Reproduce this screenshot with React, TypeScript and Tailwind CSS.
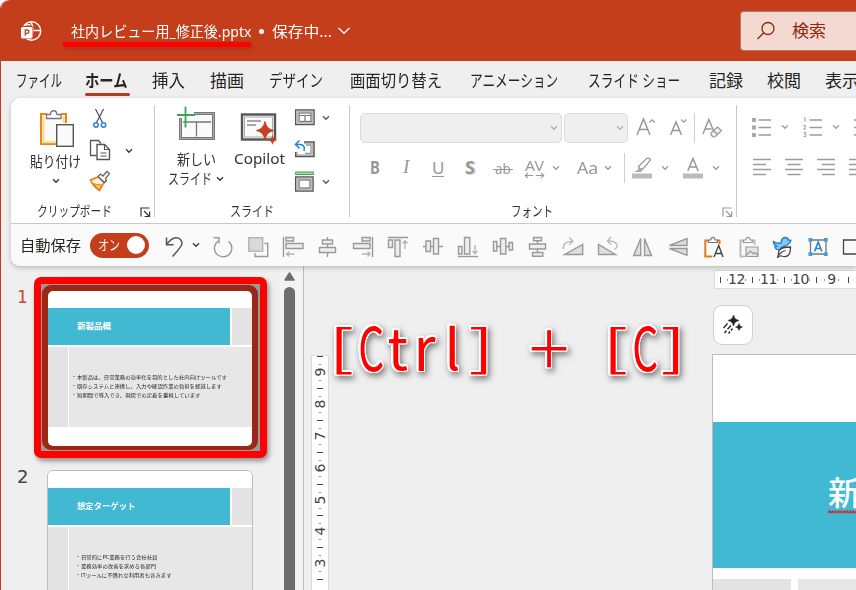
import React, { useLayoutEffect, useRef, useState } from 'react';
import clsx from 'clsx';

type FitProps = {
  w: number;
  className?: string;
  children: React.ReactNode;
};

// One line of text squeezed or stretched to a given width
function Fit({ w, className, children }: FitProps) {
  const ref = useRef<HTMLSpanElement>(null);
  const [scale, setScale] = useState(1);

  useLayoutEffect(() => {
    if (ref.current) setScale(w / ref.current.offsetWidth);
  }, [w]);

  return (
    <div className={clsx('shrink-0 whitespace-nowrap', className)} style={{ width: w }}>
      <span ref={ref} className="inline-block origin-left" style={{ transform: `scaleX(${scale})` }}>
        {children}
      </span>
    </div>
  );
}

type IconProps = {
  w?: number;
  h?: number;
  className?: string;
  children: React.ReactNode;
};

function Icon({ w = 22, h = 22, className, children }: IconProps) {
  return (
    <svg width={w} height={h} viewBox={`0 0 ${w} ${h}`} fill="none" stroke="currentColor" className={clsx('block shrink-0', className)}>
      {children}
    </svg>
  );
}

function Chevron({ className }: { className?: string }) {
  return (
    <Icon w={8} h={6} className={className}>
      <path d="M1 1.3l3 3 3-3" strokeWidth="1.3" />
    </Icon>
  );
}

function Launcher({ className }: { className?: string }) {
  return (
    <Icon w={11} h={11} className={className}>
      <path d="M1 9.5V1h8.5M4 4l5 5M9.6 4.5v5h-5" strokeWidth="1.2" />
    </Icon>
  );
}

const tabs = [
  { label: 'ファイル', w: 46, gap: 'ml-[15px]' },
  { label: 'ホーム', w: 43, gap: 'ml-[23px]', active: true },
  { label: '挿入', w: 33, gap: 'ml-[24px]' },
  { label: '描画', w: 34, gap: 'ml-[25px]' },
  { label: 'デザイン', w: 54, gap: 'ml-[25px]' },
  { label: '画面切り替え', w: 92, gap: 'ml-[27px]' },
  { label: 'アニメーション', w: 88, gap: 'ml-[28px]' },
  { label: 'スライド ショー', w: 92, gap: 'ml-[30px]' },
  { label: '記録', w: 34, gap: 'ml-[29px]' },
  { label: '校閲', w: 34, gap: 'ml-[24px]' },
  { label: '表示', w: 34, gap: 'ml-[24px]' },
];

function TitleBar() {
  return (
    <div className="relative flex h-[61px] shrink-0 items-center rounded-tl-[9px] bg-[#c43e1c] text-white">
      <Icon w={22} h={22} className="ml-[19px]">
        <circle cx="11.500" cy="11" r="9.200" strokeWidth="1.400" />
        <path d="M10.500 2c2 2 2.600 4.500 2.500 8.500M20.500 10.500H13c0 4-1 6.500-4 9.300M4.500 5.500q3-1.800 6-.5" strokeWidth="1.400" />
        <rect x="0.500" y="6" width="13" height="13" rx="2.500" fill="#c43e1c" stroke="none" />
        <rect x="1" y="7" width="11.500" height="11.500" rx="1.500" fill="white" stroke="none" />
        <path d="M5.300 15.800V10h1.900a1.700 1.700 0 0 1 0 3.400H5.300" stroke="#c43e1c" strokeWidth="1.300" />
      </Icon>
      <Fit w={180} className="ml-[29px] text-[15px] leading-[20px]">社内レビュー用_修正後.pptx</Fit>
      <span className="ml-[8px] mt-px h-[5px] w-[5px] rounded-full bg-white" />
      <Fit w={60} className="ml-[8px] text-[15px] leading-[20px]">保存中...</Fit>
      <Icon w={14} h={8} className="ml-[5px]">
        <path d="M1.500 1l5.500 5.300L12.500 1" strokeWidth="1.300" />
      </Icon>
      <div className="absolute left-[62px] top-[42px] h-[5px] w-[188px] bg-[#fe0000] shadow-[1px_2px_4px_rgba(0,0,0,0.15)]" />
      <div className="ml-auto flex h-[40px] w-[116px] shrink-0 items-center rounded-l-[4px] border border-r-0 border-[#b07a6c] bg-[#f3d9d2] text-[#8e2a10]">
        <Icon w={20} h={20} className="ml-[15px]">
          <circle cx="12" cy="7.500" r="6" strokeWidth="1.300" />
          <path d="M7.700 11.800L1.500 18" strokeWidth="1.300" />
        </Icon>
        <Fit w={34} className="ml-[16px] text-[17px] leading-[20px]">検索</Fit>
      </div>
    </div>
  );
}

function Tabs() {
  return (
    <div className="flex h-[37px] shrink-0 items-start pt-[9px] text-[17px] leading-[22px] text-[#252423]">
      {tabs.map((tab) => (
        <div key={tab.label} className={clsx('shrink-0', tab.gap)}>
          <Fit w={tab.w} className={tab.active ? 'font-bold' : ''}>{tab.label}</Fit>
          {tab.active && <div className="mt-px h-[3px] w-[45px] -mr-[2px] rounded-full bg-[#b83b1d]" />}
        </div>
      ))}
    </div>
  );
}

function ClipboardGroup() {
  return (
    <div className="flex w-[143px] shrink-0 flex-col text-[#333]">
      <div className="flex h-[102px]">
        <div className="ml-[18px] flex w-[52px] flex-col items-center pt-[11px]">
          <Icon w={36} h={39} className="ml-[3px]">
            <path d="M8 5H2v30h16M22 5h5v9" stroke="#e8861e" strokeWidth="2" />
            <path d="M4.500 7v26H17M24.500 7v7" stroke="#fbdc98" strokeWidth="2.500" />
            <path d="M6 8h17v6h-6v18H6z" fill="#fafafa" stroke="none" />
            <path d="M7.500 9.500V5.500h4c.3-5 6-5 6.500 0h4v4z" fill="white" stroke="#777" strokeWidth="1.300" />
            <rect x="17.700" y="15.700" width="16.600" height="21.600" fill="#fafafa" stroke="#555" strokeWidth="1.400" />
          </Icon>
          <Fit w={51} className="mt-[3px] text-[15px] leading-[20px]">貼り付け</Fit>
          <Chevron className="ml-[2px] mt-[7px]" />
        </div>
        <div className="ml-[8px] flex flex-col items-center pt-[9px]">
          <Icon w={22} h={22} className="text-[#555]">
            <path d="M6.500 2l7 13.500M14.500 2l-7 13.500" strokeWidth="1.300" />
            <circle cx="7" cy="18" r="2.200" stroke="#2488d8" strokeWidth="1.500" />
            <circle cx="14.500" cy="18" r="2.200" stroke="#2488d8" strokeWidth="1.500" />
          </Icon>
          <Icon w={22} h={22} className="mt-[10px] text-[#555]">
            <path d="M7.500 16.500H1.500v-15h8l2.500 3" strokeWidth="1.300" />
            <path d="M8 5.500h7.500l5 5v10H8z" fill="white" strokeWidth="1.400" />
            <path d="M15.500 5.500v5h5M11.500 14h6M11.500 17h6" strokeWidth="1.200" />
          </Icon>
          <Icon w={22} h={22} className="mt-[9px] text-[#666]">
            <path d="M9 7L1.500 10q3 7 9 10.500l4.500-8z" fill="#fdf3dd" stroke="#e17a12" strokeWidth="1.500" />
            <path d="M3.500 13.500q5 1.500 9.500 1.500l-2.500 5z" fill="#f9c56e" stroke="#e17a12" />
            <path d="M9 6.500l2.500-2.500 2.500 2 4-4.500 2.500 2-4 5 1 2-2 2z" fill="white" strokeWidth="1.300" />
          </Icon>
        </div>
        <Chevron className="ml-[14px] mt-[50px]" />
      </div>
      <div className="flex items-start">
        <Fit w={75} className="ml-[26px] pt-[2px] text-[14px] leading-[18px]">クリップボード</Fit>
        <Launcher className="ml-[28px] mt-[7px]" />
      </div>
    </div>
  );
}

function SlideGroup() {
  return (
    <div className="flex w-[194px] shrink-0 flex-col text-[#333]">
      <div className="flex h-[102px]">
        <div className="ml-[13px] flex w-[60px] flex-col pt-[8px]">
          <Icon w={38} h={36} className="ml-[9px] text-[#777]">
            <rect x="3.500" y="7.500" width="33" height="25" fill="#fafafa" strokeWidth="3" />
            <rect x="3.500" y="7.500" width="33" height="25" stroke="#aaa" strokeWidth="1" />
            <path d="M6 16h28M19.500 16v14.500" strokeWidth="1.300" />
            <path d="M1 6h16v6H1z" fill="white" stroke="none" />
            <path d="M8.500 0.500v21M0 9h18" stroke="#35a853" strokeWidth="1.800" />
          </Icon>
          <Fit w={39} className="ml-[9px] mt-[7px] text-[15px] leading-[20px]">新しい</Fit>
          <div className="flex items-center">
            <Fit w={44} className="text-[15px] leading-[19px]">スライド</Fit>
            <Chevron className="ml-[4px]" />
          </div>
        </div>
        <div className="ml-[5px] flex w-[52px] flex-col items-center pt-[15px]">
          <Icon w={38} h={34} className="text-[#555]">
            <rect x="2" y="1.500" width="33" height="25" fill="#fafafa" strokeWidth="2.400" />
            <rect x="4.500" y="4" width="28" height="20" stroke="#aaa" strokeWidth="1" />
            <path d="M7 8h14M7 12h9" strokeWidth="1.200" />
            <path d="M25 8.500q1.300 7.500 8.500 9-7.200 1.500-8.500 9-1.300-7.500-8.500-9 7.200-1.500 8.500-9z" fill="#c6401f" stroke="#c6401f" strokeWidth="1" />
            <path d="M32.500 22q.8 4.200 4.500 5-3.700.8-4.500 5-.8-4.200-4.500-5 3.700-.8 4.500-5z" fill="#c6401f" stroke="none" />
          </Icon>
          <Fit w={51} className="mt-[1px] text-[15px] leading-[20px]">Copilot</Fit>
        </div>
        <div className="ml-[9px] flex w-[40px] flex-col gap-[10px] pt-[9px] text-[#555]">
          <div className="flex items-center">
            <Icon>
              <rect x="1.700" y="3" width="18.300" height="14.500" strokeWidth="1.500" />
              <rect x="3.200" y="4.500" width="15.300" height="11.500" stroke="#bbb" strokeWidth="1.500" />
              <rect x="5" y="6" width="12" height="8.500" stroke="#777" strokeWidth="1.300" />
              <path d="M5 8.500h12M11 8.500v6" stroke="#777" strokeWidth="1.200" />
            </Icon>
            <Chevron className="ml-[6px]" />
          </div>
          <Icon>
            <path d="M10 4.500h8.500V16H3.200v-3" stroke="#bbb" strokeWidth="1.500" />
            <path d="M10 3h10v14.500H1.700V13" strokeWidth="1.500" />
            <path d="M12 6h5v8.500H11" stroke="#999" strokeWidth="1.300" />
            <path d="M5.500 1.500L1.500 5.500l4 4M1.500 5.500h4.500c4 0 5 3 4 6.500" stroke="#1f8ad6" strokeWidth="1.600" />
          </Icon>
          <div className="flex items-center">
            <Icon>
              <rect x="1.700" y="1" width="17.600" height="2.500" fill="#a8dbb2" stroke="#3aa655" strokeWidth="1" />
              <rect x="1.700" y="6" width="17.300" height="14" strokeWidth="1.500" />
              <rect x="3.200" y="7.500" width="14.300" height="11" stroke="#bbb" strokeWidth="1.500" />
              <rect x="5" y="9" width="11" height="8" stroke="#777" strokeWidth="1.300" />
            </Icon>
            <Chevron className="ml-[6px]" />
          </div>
        </div>
      </div>
      <Fit w={44} className="ml-[75px] pt-[2px] text-[14px] leading-[18px]">スライド</Fit>
    </div>
  );
}

function FontGroup() {
  return (
    <div className="flex w-[386px] shrink-0 flex-col text-[#989898]">
      <div className="flex h-[102px] flex-col pl-[10px] pt-[15px]">
        <div className="flex h-[30px] items-center">
          <div className="flex h-[30px] w-[202px] items-center justify-end rounded-[5px] border border-[#dcdcdc] bg-[#efefef] pr-[3px]">
            <Chevron className="text-[#b0b0b0]" />
          </div>
          <div className="ml-[2px] flex h-[30px] w-[64px] items-center justify-end rounded-[5px] border border-[#dcdcdc] bg-[#efefef] pr-[3px]">
            <Chevron className="text-[#b0b0b0]" />
          </div>
          <Icon w={20} h={22} className="ml-[8px]">
            <path d="M1 18L7.500 2l6.500 16M3.500 12.500h8" strokeWidth="1.500" />
            <path d="M13.500 5.500l2.700-2.700 2.700 2.700" strokeWidth="1.200" />
          </Icon>
          <Icon w={20} h={22} className="ml-[13px]">
            <path d="M1.500 18L7 5l5.500 13M3.500 13.500h7" strokeWidth="1.500" />
            <path d="M12 2.500l2.700 2.700 2.700-2.700" strokeWidth="1.200" />
          </Icon>
          <span className="ml-[5px] h-[30px] w-px bg-[#d0d0d0]" />
          <Icon w={22} h={22} className="ml-[7px]">
            <path d="M1 17L6.800 2.500 12.500 16M3.500 12h6" strokeWidth="1.500" />
            <path d="M9 16l6.500-6 4 3.500-6.500 6.500h-2L9 18zM11.500 13.500l4 4" fill="#eee" strokeWidth="1.200" />
          </Icon>
        </div>
        <div className="mt-[10px] flex h-[30px] items-center">
          <Fit w={10} className="-mt-[3px] ml-[10px] text-[18px] font-bold leading-[24px]">B</Fit>
          <span className="-mt-[2px] ml-[23px] w-[10px] font-['Liberation_Serif',serif] text-[19px] italic leading-[24px]">I</span>
          <span className="-mt-px ml-[19px] w-[12px] border-b-[1.500px] border-[#989898] text-center text-[17px] leading-[17px]">U</span>
          <Fit w={10} className="-mt-[3px] ml-[21px] text-[18px] font-bold leading-[24px] [text-shadow:1.500px_1px_0_#ddd]">S</Fit>
          <div className="relative ml-[18px] w-[20px]">
            <Fit w={16} className="ml-[2px] text-[15px] leading-[24px]">ab</Fit>
            <span className="absolute left-0 top-[13px] h-px w-[20px] bg-[#989898]" />
          </div>
          <div className="ml-[11px] flex w-[21px] flex-col items-center">
            <Fit w={19} className="text-[15px] leading-[14px]">AV</Fit>
            <Icon w={21} h={7}>
              <path d="M4 .8L1.200 3.500 4 6.200M1.200 3.500h8M17 .8l2.800 2.700L17 6.200M19.800 3.500h-8" strokeWidth="1.100" />
            </Icon>
          </div>
          <Chevron className="ml-[7px]" />
          <Fit w={21} className="ml-[17px] text-[16px] leading-[22px]">Aa</Fit>
          <Chevron className="ml-[6px]" />
          <span className="ml-[12px] h-[30px] w-px bg-[#d0d0d0]" />
          <Icon w={20} h={22} className="ml-[7px]">
            <path d="M6.500 9.500l8-8q3-1 4 1.500l-7.500 9q-3 1-4.500-2.500z" strokeWidth="1.300" />
            <path d="M7 10l3.500 3.500-1.500 1.500H2l3.500-2z" fill="#aaa" stroke="none" />
            <path d="M0 16.500h20v5H0z" fill="#bbb" stroke="none" />
          </Icon>
          <Chevron className="ml-[9px]" />
          <Icon w={20} h={22} className="ml-[14px]">
            <path d="M4.800 14L10 1.500 15.200 14M6.500 10h7" strokeWidth="1.500" />
            <path d="M0 16.500h20v5H0z" fill="#bbb" stroke="none" />
          </Icon>
          <Chevron className="ml-[9px]" />
        </div>
      </div>
      <div className="flex items-start">
        <Fit w={42} className="ml-[161px] pt-[2px] text-[14px] leading-[18px] text-[#333]">フォント</Fit>
        <Launcher className="ml-[169px] mt-[7px]" />
      </div>
    </div>
  );
}

function ParagraphGroup() {
  return (
    <div className="flex shrink-0 flex-col pl-[15px] pt-[18px] text-[#9c9c9c]">
      <div className="flex items-center">
        <Icon>
          <path d="M0 2h4v4H0zM0 9.500h4v4H0zM0 17h4v4H0z" fill="#aaa" stroke="none" />
          <path d="M6.500 4H19M6.500 11.500H19M6.500 19H19" strokeWidth="1.300" />
        </Icon>
        <Chevron className="ml-[7px]" />
        <Icon className="ml-[14px]">
          <path d="M.8 2.500L2 1.500V6M.3 9.800q2-1.500 2.500.2 0 .8-2.300 3H3.300M.5 16.500H3l-1.500 1.700q2 0 1.500 1.800-.8 1.300-2.500.3" strokeWidth="1" />
          <path d="M6.500 4H19M6.500 11.500H19M6.500 19H19" strokeWidth="1.300" />
        </Icon>
        <Chevron className="ml-[7px]" />
        <Icon className="ml-[14px]">
          <path d="M0 4h19M0 11.500h19M0 19h19" strokeWidth="1.300" />
        </Icon>
      </div>
      <div className="mt-[19px] flex gap-[10px]">
        <Icon>
          <path d="M1 2.500h18M1 7.500h13M1 12.500h18M1 17.500h13" strokeWidth="1.300" />
        </Icon>
        <Icon>
          <path d="M1 2.500h18M3.500 7.500h13M1 12.500h18M3.500 17.500h13" strokeWidth="1.300" />
        </Icon>
        <Icon>
          <path d="M1 2.500h18M6 7.500h13M1 12.500h18M6 17.500h13" strokeWidth="1.300" />
        </Icon>
        <Icon>
          <path d="M1 2.500h18M1 7.500h18M1 12.500h18M1 17.500h18" strokeWidth="1.300" />
        </Icon>
      </div>
    </div>
  );
}

const quickIcons = [
  <path d="M16.500 5.300a8.700 8.700 0 1 1-9.500-.8M1.700 1.700H7V7.500" />,
  <>
    <rect x="1.700" y="1.700" width="14" height="13.500" fill="#d9d9d9" stroke="#b5b5b5" />
    <path d="M17.500 7.500h3.200v13H8v-3.500" />
  </>,
  <>
    <path d="M1.500 1v20" />
    <path d="M4 1.500h7.500V5H4zM4 7.500h17v5H4z" fill="#eee" />
    <path d="M12.500 18h-8M7.300 15.500L4.500 18l2.800 2.500" stroke="#b5b5b5" />
  </>,
  <>
    <path d="M10.500 1v20" />
    <path d="M5.500 4h10v4h-10zM2.500 11.500h16v5h-16z" fill="#eee" />
  </>,
  <>
    <path d="M20.500 1v20" />
    <path d="M10 1.500h8V5h-8zM1.500 7.500H18v5H1.500z" fill="#eee" />
    <path d="M10 18h8M15.500 15.500L18 18l-2.500 2.500" stroke="#b5b5b5" />
  </>,
  <>
    <path d="M1 1.500h20" />
    <path d="M1.500 4h4v7.500h-4zM8 4h5v16.500H8z" fill="#eee" />
    <path d="M18 13V5M15.500 7.500L18 4.700l2.500 2.800" stroke="#b5b5b5" />
  </>,
  <>
    <path d="M1 10.500h20" />
    <path d="M4 5h4.500v10.500H4zM11.500 2.500h5v15.500h-5z" fill="#eee" />
  </>,
  <>
    <path d="M1 20.500h20" />
    <path d="M1.500 10.500H5v7.500H1.500zM7.500 1.500h5.300V18H7.500z" fill="#eee" />
    <path d="M18 9v8.500M15.500 15l2.500 2.800 2.500-2.800" stroke="#b5b5b5" />
  </>,
  <>
    <path d="M1 10.500h20" />
    <path d="M1.500 5.500h3.300v9.500H1.500zM8.500 2.500h5.300v15.500H8.500zM17.200 6.500h3.300v7.500h-3.300z" fill="#eee" />
  </>,
  <>
    <path d="M10.500 1v20" />
    <path d="M6.500 1.500h8v3.300h-8zM2.500 8h16v5h-16zM5.500 16.500h10.300v3.800H5.500z" fill="#eee" />
  </>,
  <>
    <path d="M2.700 18.500h18V8.500z" fill="#ddd" />
    <path d="M1.500 13c-1-5 3-8 9-7.300M7.500 1.500L11 5.500l-4 3.300" stroke="#b5b5b5" strokeWidth="1.300" />
  </>,
  <>
    <path d="M1.500 8.500v10h17z" fill="#ddd" />
    <path d="M17.500 13.500c6-4 1-9-6.500-8.500M14 1L10.500 5l3.800 3.500" stroke="#b5b5b5" strokeWidth="1.300" />
  </>,
  <path d="M1.700 19.500h7V2.500zM19.500 19.500h-7V2.500z" fill="#ddd" />,
  <path d="M2.500 9.500l17.500-7v7zM2.500 12.500H20v6.800z" fill="#ddd" />,
  <>
    <path d="M6.500 4.500H3.300v16h7M14.500 4.500h3v3.500" stroke="#e07b1a" strokeWidth="2" />
    <path d="M6.500 6.500V4h2.300c.3-3.500 3.800-3.500 4.200 0h2.300v2.500z" fill="white" stroke="#777" strokeWidth="1.200" />
    <path d="M12 21l4.700-11.500L21 21M13.500 17.500h6" stroke="#444" strokeWidth="1.400" />
  </>,
  <>
    <path d="M6.500 4.500H3.500v16H8M14.500 4.500h3v4.500" stroke="#bbb" strokeWidth="2" />
    <path d="M6.500 6.500V4h2.300c.3-3.500 3.800-3.500 4.200 0h2.300v2.500z" fill="white" strokeWidth="1.200" />
    <path d="M9 11h12v9.500H9zM9.500 19l4-4 3 3 1.500-1.500 3 3" fill="#e5e5e5" strokeWidth="1.200" />
  </>,
  <>
    <path d="M1.500 5.500q3.500 2.500 7.500 1.500.5-5 4-5.500 3 .3 3.500 2.500l2.300.3q-.5 3-2.800 4-1.500 2-4.500 2.200-3 1-3.500 3.500-4.500 0-5-3 1.500 0 2-.8Q1.500 9 1.500 5.500z" fill="#8cc4ef" stroke="#1d7fd0" strokeWidth="1.400" />
    <path d="M6.500 18.500q-1.500-7.500 12-7.500 0 12-9 9-1.500-.5-4 1.500zM6.500 19.500q2-3.500 7-5" fill="#fafafa" stroke="#444" strokeWidth="1.300" />
  </>,
  <>
    <path d="M3.500 4h15.500v14H3.500z" stroke="#777" strokeWidth="1.300" />
    <path d="M1.500 2h3.700v3.700H1.500zM17 2h3.700v3.700H17zM1.500 16.200h3.700v3.700H1.500zM17 16.200h3.700v3.700H17z" fill="#3b9ee0" stroke="none" />
    <path d="M7.500 15.500L11.200 6l3.700 9.500M8.800 12.500h4.800" stroke="#2488d8" strokeWidth="1.600" />
  </>,
  <path d="M1.500 4h20v14h-20z" stroke="#444" strokeWidth="1.300" />,
];

function QuickAccess() {
  return (
    <div className="flex h-[43px] shrink-0 items-center overflow-hidden rounded-bl-[9px] border-t border-[#c8c8c8] bg-[#fafafa] pl-[9px]">
      <Fit w={61} className="text-[15px] leading-[20px] text-[#252423]">自動保存</Fit>
      <div className="ml-[9px] flex h-[25px] w-[59px] shrink-0 items-center rounded-full bg-[#c43e1c] text-white">
        <Fit w={22} className="ml-[8px] text-[14px] leading-[20px]">オン</Fit>
        <span className="ml-[7px] h-[18px] w-[18px] rounded-full bg-white" />
      </div>
      <Icon className="ml-[14px] mt-[3px] text-[#555]">
        <path d="M3.500 1.500v7.300h7M3.800 8.500C9 .5 15 1 17.500 3.500c3.500 4 1 7-8 17" strokeWidth="1.500" />
      </Icon>
      <Chevron className="ml-[7px] text-[#333]" />
      <div className="ml-[5px] mt-[3px] flex text-[#999]">
        {quickIcons.map((icon, i) => (
          <div key={i} className="flex w-[35px] shrink-0 justify-center">
            <Icon className="[stroke-width:1.400]">{icon}</Icon>
          </div>
        ))}
      </div>
    </div>
  );
}

function Ribbon() {
  return (
    <div className="z-10 ml-[10px] flex h-[168px] shrink-0 flex-col rounded-l-[9px] bg-white shadow-[0_2px_5px_rgba(0,0,0,0.22)]">
      <div className="flex h-[125px] overflow-hidden">
        <ClipboardGroup />
        <span className="mt-[7px] h-[112px] w-px shrink-0 bg-[#c8c8c8]" />
        <SlideGroup />
        <span className="mt-[7px] h-[112px] w-px shrink-0 bg-[#c8c8c8]" />
        <FontGroup />
        <span className="mt-[7px] h-[112px] w-px shrink-0 bg-[#c8c8c8]" />
        <ParagraphGroup />
      </div>
      <QuickAccess />
    </div>
  );
}

type ThumbProps = {
  title: string;
  titleWidth: number;
  lines: { text: string; w: number }[];
  indent: string;
};

function SlideThumb({ title, titleWidth, lines, indent }: ThumbProps) {
  return (
    <div className="flex h-[155px] w-[204px] flex-col gap-[2px] overflow-hidden rounded-[5px] bg-white pt-[17px] font-['Noto_Sans_CJK_JP',sans-serif]">
      <div className="flex h-[37px] shrink-0 gap-[2px]">
        <div className="flex w-[182px] items-center bg-[#41b9d3] pb-[3px] pl-[29px] text-white">
          <Fit w={titleWidth} className="text-[8.500px] font-bold leading-[12px]">{title}</Fit>
        </div>
        <div className="flex-1 bg-[#e3e3e3]" />
      </div>
      <div className="flex h-[80px] shrink-0 gap-px">
        <div className="w-[20px] bg-[#e3e3e3]" />
        <div className={clsx('flex-1 bg-[#e7e7e7] pt-[25px]', indent)}>
          {lines.map((line) => (
            <div key={line.text} className="flex h-[9px] items-center text-[5px] leading-[9px] text-[#222]">
              <span className="mr-[2px] h-px w-[2px] bg-[#41b9d3]" />
              <Fit w={line.w}>{line.text}</Fit>
            </div>
          ))}
        </div>
      </div>
    </div>
  );
}

function SlideList() {
  return (
    <div className="flex w-[279px] shrink-0 flex-col font-['Noto_Sans_CJK_JP',sans-serif]">
      <div className="mt-[11px] flex h-[181px] shrink-0">
        <span className="w-[33px] pl-[16px] pt-[10px] font-['DejaVu_Sans',sans-serif] text-[17px] leading-[20px] text-[#d24726]">1</span>
        <div className="h-[181px] w-[233px] rounded-[7px] border-[7px] border-[#fe0000] bg-[#999] shadow-[2px_3px_5px_rgba(0,0,0,0.4)]">
          <div className="ml-[1px] mt-[1px] h-[165px] w-[216px] rounded-[9px] border-[6px] border-b-[4px] border-[#9c2716] bg-[#9c2716] shadow-[inset_0_0_3px_#5e150b]">
            <SlideThumb
              title="新製品概"
              titleWidth={34}
              indent="pl-[4px]"
              lines={[
                { text: '本製品は、日常業務の効率化を目的とした社内向けツールです', w: 150 },
                { text: '既存システムと連携し、入力や確認作業の負担を軽減します', w: 145 },
                { text: '短期間で導入でき、現場での定着を重視しています', w: 124 },
              ]}
            />
          </div>
        </div>
      </div>
      <div className="mt-[12px] flex shrink-0">
        <span className="w-[46px] pl-[16px] font-['DejaVu_Sans',sans-serif] text-[18px] leading-[13px] text-[#444]">2</span>
        <div className="w-[206px] rounded-[6px] border border-[#bdbdbd]">
          <SlideThumb
            title="想定ターゲット"
            titleWidth={59}
            indent="pl-[8px]"
            lines={[
              { text: '日常的にPC業務を行う会社社員', w: 76 },
              { text: '業務効率の改善を求める各部門', w: 75 },
              { text: 'ITツールに不慣れな利用者も含みます', w: 90 },
            ]}
          />
        </div>
      </div>
    </div>
  );
}

function Scrollbar() {
  return (
    <div className="flex w-[24px] shrink-0 flex-col border-r border-[#bdbdbd] bg-[#f3f3f3] pl-[4px] pt-[6px]">
      <Icon w={11} h={9}>
        <path d="M5.500 1L10 8H1z" fill="#6e6e6e" stroke="#6e6e6e" strokeLinejoin="round" strokeWidth="1.500" />
      </Icon>
      <div className="mt-[6px] w-[11px] flex-1 rounded-t-full bg-[#6e6e6e]" />
    </div>
  );
}

function VerticalRuler() {
  return (
    <div className="mt-[89px] w-[18px] shrink-0 overflow-hidden border border-b-0 border-[#dcdcdc] bg-white font-['DejaVu_Sans',sans-serif] text-[14px] text-[#444]">
      {[9, 8, 7, 6, 5, 4, 3].map((n) => (
        <div key={n} className="flex h-[31.900px] flex-col items-center">
          <span className="h-px w-[6px] shrink-0 bg-[#444]" />
          <span className="mt-[7px] h-px w-[2px] shrink-0 bg-[#999]" />
          <span className="flex h-[14px] w-[16px] shrink-0 -rotate-90 items-center justify-center leading-[14px]">{n}</span>
          <span className="mt-[1px] h-px w-[2px] shrink-0 bg-[#999]" />
        </div>
      ))}
      <div className="mx-auto h-px w-[6px] bg-[#444]" />
    </div>
  );
}

function Editor() {
  return (
    <div className="ml-auto flex w-[144px] shrink-0 flex-col overflow-hidden pt-[4px]">
      <div className="ml-[2px] flex h-[19px] shrink-0 overflow-hidden border border-r-0 border-[#dcdcdc] bg-white pl-[5px] font-['DejaVu_Sans',sans-serif] text-[14px] leading-[17px] text-[#444]">
        {[12, 11, 10, 9].map((n) => (
          <div key={n} className="flex w-[32px] shrink-0 items-center">
            <span className="h-[6px] w-px shrink-0 bg-[#444]" />
            <span className={clsx('h-[2px] w-px shrink-0 bg-[#999]', n > 9 ? 'ml-[6px]' : 'ml-[7px]')} />
            <span className={clsx('shrink-0 text-center tracking-[-0.500px]', n > 9 ? 'w-[17px]' : 'w-[13px]')}>{n}</span>
            <span className="h-[2px] w-px shrink-0 bg-[#999]" />
          </div>
        ))}
        <span className="mt-[6px] h-[6px] w-px shrink-0 bg-[#444]" />
      </div>
      <div className="ml-[1px] mt-[16px] flex h-[40px] w-[40px] shrink-0 items-center justify-center rounded-[9px] border border-[#cfcfcf] bg-white text-[#222]">
        <Icon>
          <path d="M11.500 1q.8 4.700 5.500 5.500-4.700.8-5.500 5.500Q10.700 7.300 6 6.500q4.700-.8 5.500-5.500zM17 9.500q.5 3 3.500 3.500-3 .5-3.500 3.500-.5-3-3.500-3.500 3-.5 3.500-3.500z" fill="currentColor" stroke="currentColor" strokeWidth=".5" />
          <path d="M5.500 9.500l-4 4.500M9 11.500l-3.500 3.700M4.500 16.500L2.500 19M10.500 14.500L9 16.500M8 17.500l-1.500 2" strokeWidth="1.300" />
        </Icon>
      </div>
      <div className="mt-[9px] flex-1 border-l border-t border-[#bdbdbd] bg-white pt-[67px]">
        <div className="flex h-[146px] flex-col justify-center overflow-hidden bg-[#41b9d3] pl-[115px] text-white">
          <div className="h-[34px] whitespace-nowrap text-[33px] font-medium leading-[34px]">新製品概</div>
          {/* spelling squiggle */}
          <Icon w={30} h={4} className="text-[#e02020]">
            <path d="M0 2.800l1.500-1.800L3 2.800 4.500 1 6 2.800 7.500 1 9 2.800 10.500 1 12 2.800 13.500 1 15 2.800 16.500 1 18 2.800 19.500 1 21 2.800 22.500 1 24 2.800 25.500 1 27 2.800 28.500 1 30 2.800" strokeWidth="1.200" />
          </Icon>
        </div>
        <div className="mt-[11px] flex h-[20px] gap-[7px]">
          <div className="w-[78px] shrink-0 bg-[#e3e3e3]" />
          <div className="flex-1 bg-[#e7e7e7]" />
        </div>
      </div>
    </div>
  );
}

const keyGlyphs = [
  { char: '[', cell: 'w-[27px]', style: 'text-[49px] scale-x-[1.550] -translate-x-[2px]' },
  { char: 'C', cell: 'w-[27px]', style: 'text-[60px] scale-x-[0.680] translate-x-[1px]' },
  { char: 't', cell: 'w-[27px]', style: 'text-[57px] scale-x-[0.950]' },
  { char: 'r', cell: 'w-[28px]', style: 'text-[60px] scale-x-[0.950]' },
  { char: 'l', cell: 'w-[27px]', style: 'text-[56px] translate-y-[1px]' },
  { char: ']', cell: 'w-[27px]', style: 'text-[49px] scale-x-[1.550] translate-x-[2px]' },
  { char: '+', cell: 'w-[112px]', style: 'text-[75px] font-light -translate-y-[1px]' },
  { char: '[', cell: 'w-[27px]', style: 'text-[49px] scale-x-[1.550] -translate-x-[3px]' },
  { char: 'C', cell: 'w-[27px]', style: 'text-[60px] scale-x-[0.680]' },
  { char: ']', cell: 'w-[27px]', style: 'text-[49px] scale-x-[1.550] translate-x-[1px]' },
];

// Shortcut caption laid over the editing area
function KeyCaption() {
  return (
    <div className="absolute left-[329px] top-[310px] z-20 flex h-[70px] items-center font-['Noto_Sans_CJK_JP',sans-serif] text-[#fe0000] [filter:drop-shadow(1.500px_0_0_white)_drop-shadow(-1.500px_0_0_white)_drop-shadow(0_1.500px_0_white)_drop-shadow(0_-1.500px_0_white)_drop-shadow(2px_3px_3px_rgba(0,0,0,0.5))]">
      {keyGlyphs.map((glyph, i) => (
        <span key={i} className={clsx('flex h-[70px] shrink-0 items-center justify-center', glyph.cell)}>
          <span className={clsx('leading-[70px]', glyph.style)}>{glyph.char}</span>
        </span>
      ))}
    </div>
  );
}

export default function App() {
  return (
    <div className="relative flex h-[590px] w-[856px] flex-col overflow-hidden rounded-tl-[9px] border-l border-[#c43e1c] bg-[#efefef] font-['Noto_Sans','Noto_Sans_CJK_JP',sans-serif]">
      <TitleBar />
      <Tabs />
      <Ribbon />
      <div className="flex min-h-0 flex-1 overflow-hidden">
        <SlideList />
        <Scrollbar />
        <div className="flex min-w-0 flex-1 pl-[7px]">
          <VerticalRuler />
          <Editor />
        </div>
      </div>
      <KeyCaption />
    </div>
  );
}
